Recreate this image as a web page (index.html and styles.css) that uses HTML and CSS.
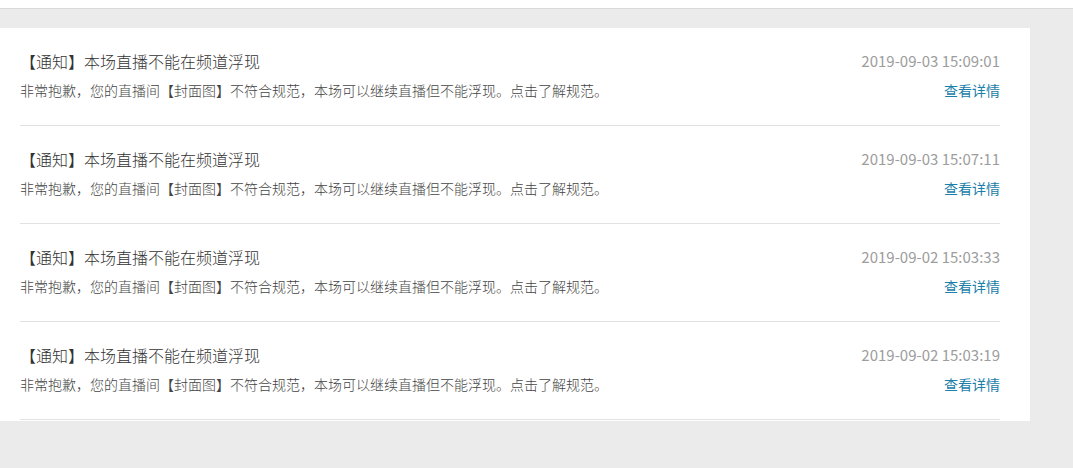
FILE: index.html
```html
<!DOCTYPE html>
<html lang="zh-CN">
<head>
<meta charset="utf-8">
<link rel="stylesheet" href="styles.css">
</head>
<body>
<div class="topbar"></div>
<main class="main">
  <section class="card">
    <div class="item">
      <div class="line">
        <span class="title">【通知】本场直播不能在频道浮现</span>
        <span class="date">2019-09-03 15:09:01</span>
      </div>
      <div class="line sub">
        <span class="desc">非常抱歉，您的直播间【封面图】不符合规范，本场可以继续直播但不能浮现。点击了解规范。</span>
        <a class="more" href="#">查看详情</a>
      </div>
    </div>
    <div class="item">
      <div class="line">
        <span class="title">【通知】本场直播不能在频道浮现</span>
        <span class="date">2019-09-03 15:07:11</span>
      </div>
      <div class="line sub">
        <span class="desc">非常抱歉，您的直播间【封面图】不符合规范，本场可以继续直播但不能浮现。点击了解规范。</span>
        <a class="more" href="#">查看详情</a>
      </div>
    </div>
    <div class="item">
      <div class="line">
        <span class="title">【通知】本场直播不能在频道浮现</span>
        <span class="date">2019-09-02 15:03:33</span>
      </div>
      <div class="line sub">
        <span class="desc">非常抱歉，您的直播间【封面图】不符合规范，本场可以继续直播但不能浮现。点击了解规范。</span>
        <a class="more" href="#">查看详情</a>
      </div>
    </div>
    <div class="item">
      <div class="line">
        <span class="title">【通知】本场直播不能在频道浮现</span>
        <span class="date">2019-09-02 15:03:19</span>
      </div>
      <div class="line sub">
        <span class="desc">非常抱歉，您的直播间【封面图】不符合规范，本场可以继续直播但不能浮现。点击了解规范。</span>
        <a class="more" href="#">查看详情</a>
      </div>
    </div>
  </section>
</main>
</body>
</html>
```

FILE: styles.css
```css
html, body {
  margin: 0;
  padding: 0;
}
body {
  background: #ebebeb;
  font-family: "Noto Sans CJK SC", "Noto Sans", sans-serif;
  height: 468px;
  overflow: hidden;
}
.topbar {
  height: 8px;
  background: #ffffff;
  border-bottom: 1px solid #d9d9d9;
}
.main {
  padding-top: 19px;
}
.card {
  width: 1030px;
  box-sizing: border-box;
  background: #ffffff;
  padding: 0 30px 1px 20px;
}
.item {
  padding: 21px 0 25px;
  border-bottom: 1px solid #e2e2e2;
}
.line {
  display: flex;
  justify-content: space-between;
  align-items: center;
  height: 24px;
}
.line.sub {
  height: 20px;
  margin-top: 7px;
}
.title {
  font-size: 16px;
  font-weight: 300;
  color: #333333;
  line-height: 24px;
}
.date {
  font-size: 15px;
  font-weight: 400;
  color: #9d9d9d;
  line-height: 24px;
}
.desc {
  font-size: 14px;
  font-weight: 300;
  color: #444444;
  line-height: 20px;
}
.more {
  font-size: 14px;
  font-weight: 400;
  color: #1a80a9;
  text-decoration: none;
  line-height: 20px;
}
```
